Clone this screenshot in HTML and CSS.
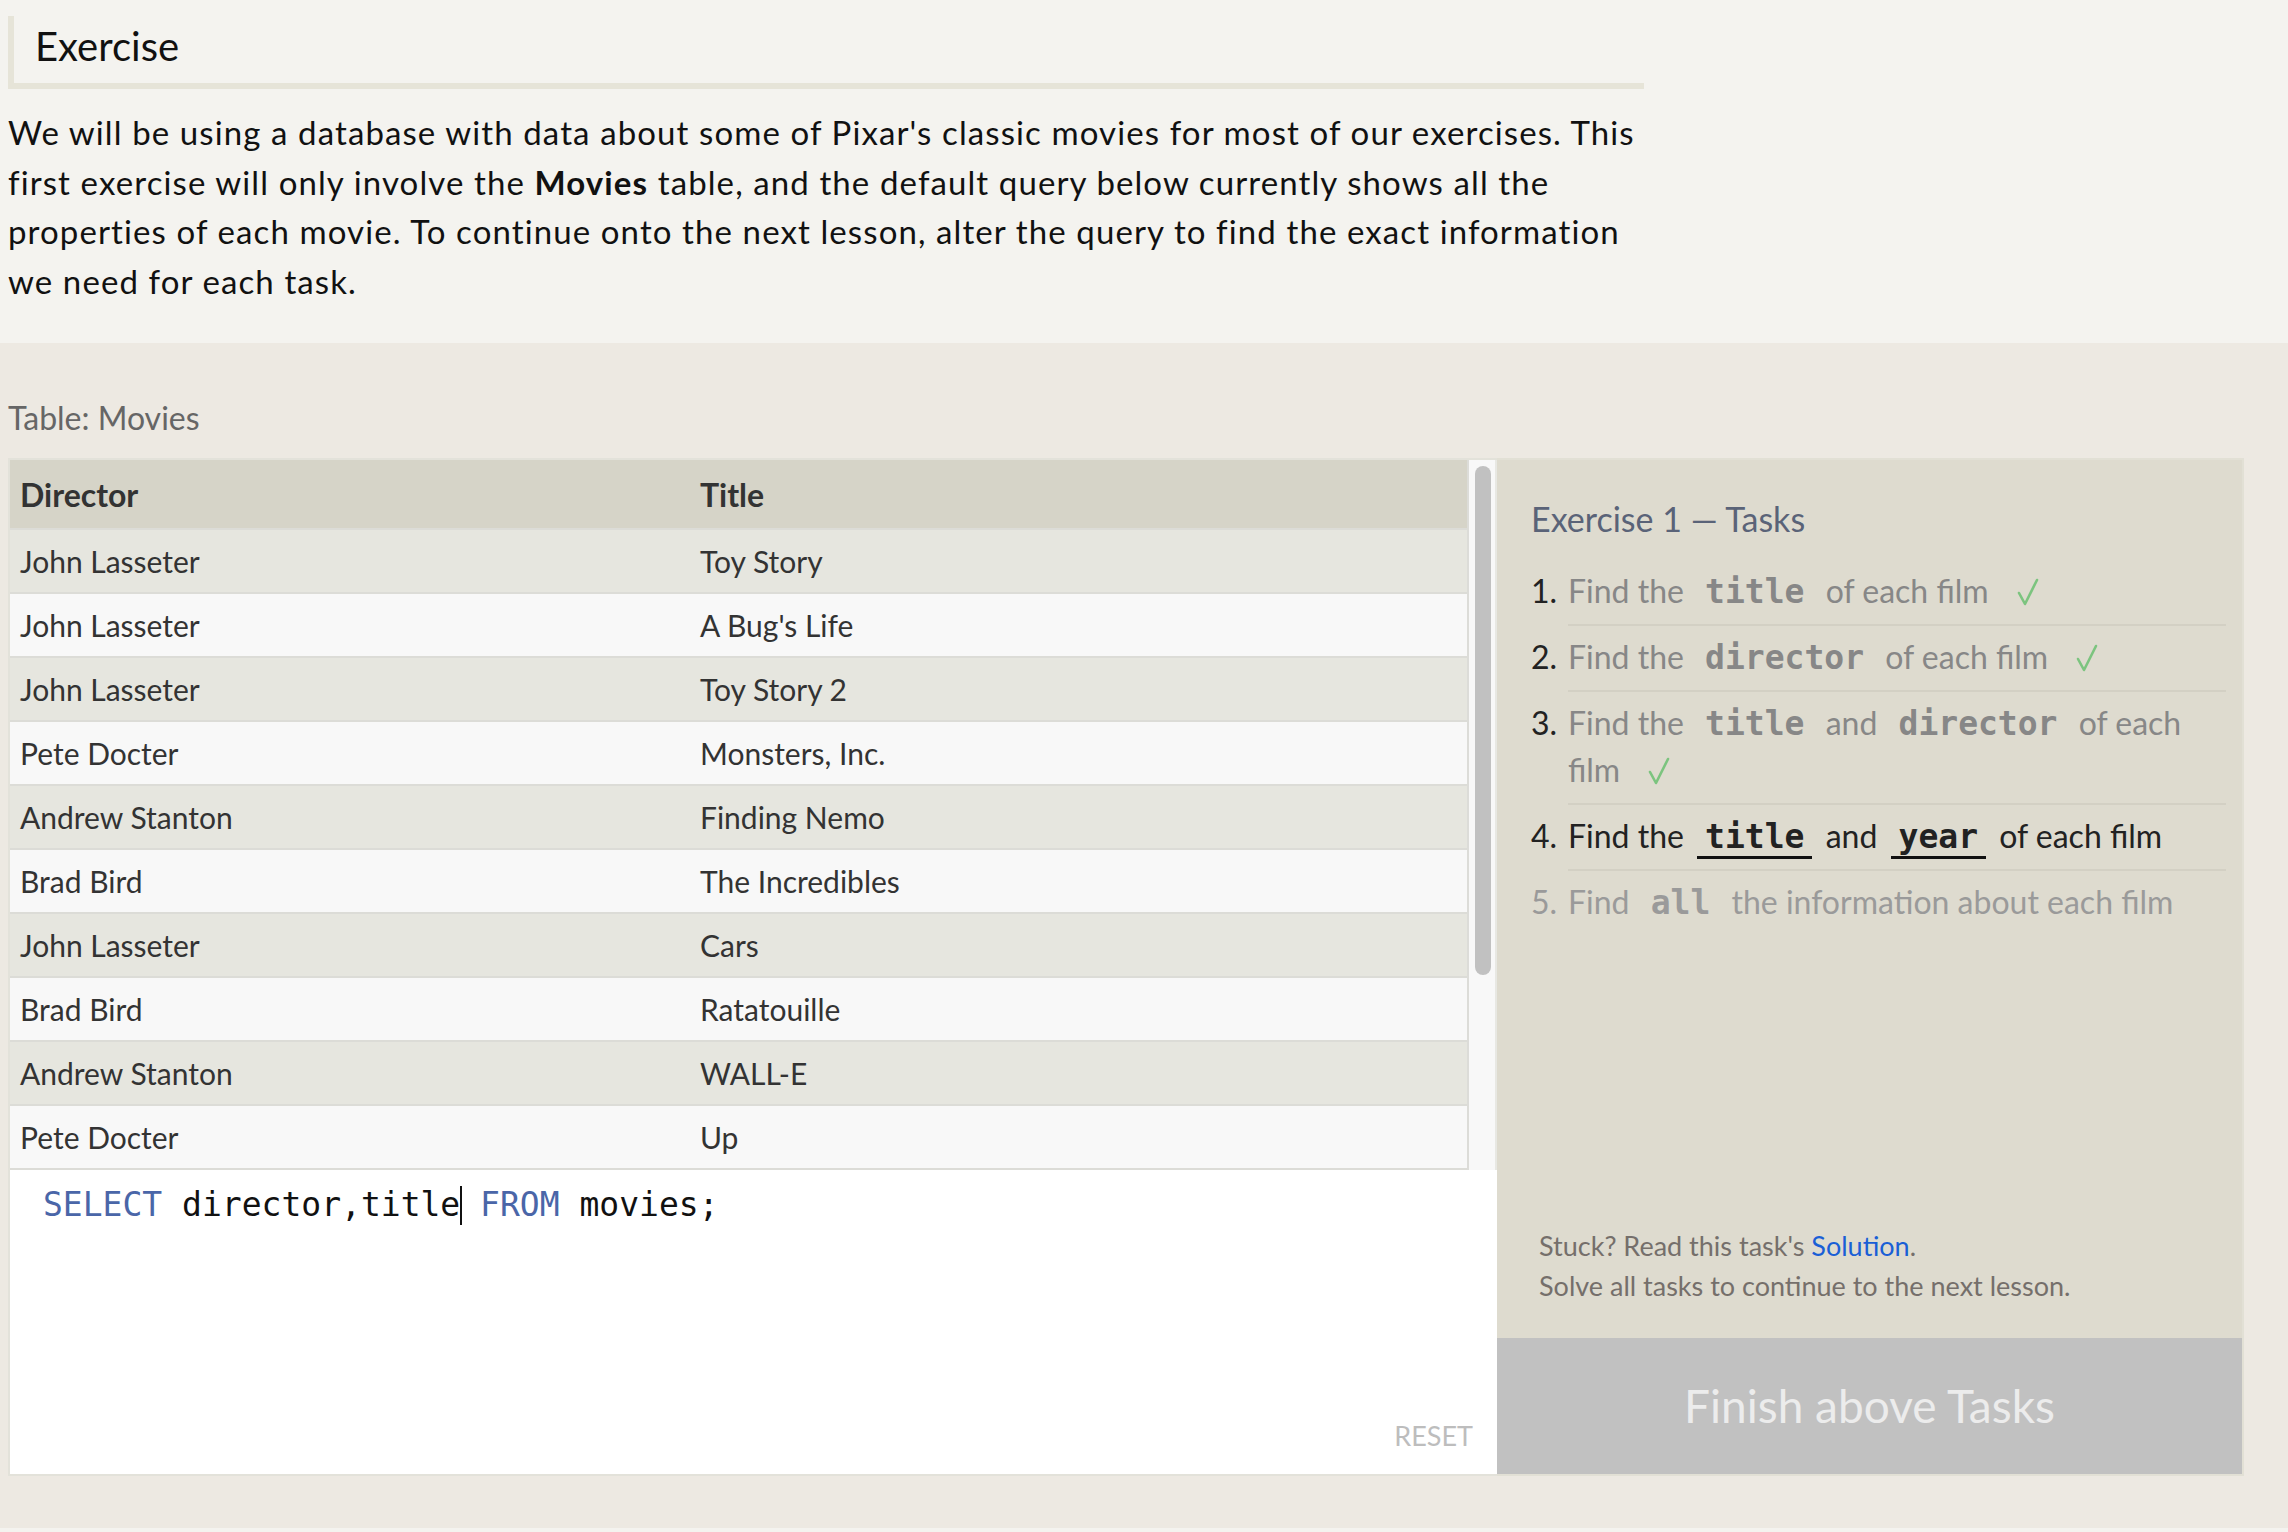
FILE: index.html
```html
<!DOCTYPE html>
<html lang="en">
<head>
<meta charset="utf-8">
<title>SQL Exercise</title>
<link rel="stylesheet" href="styles.css">
</head>
<body>
<div class="intro">
  <h1 class="heading">Exercise</h1>
  <p class="lead">We will be using a database with data about some of Pixar's classic movies for most of our exercises. This first exercise will only involve the <strong>Movies</strong> table, and the default query below currently shows all the properties of each movie. To continue onto the next lesson, alter the query to find the exact information we need for each task.</p>
</div>
<section class="exercise">
  <div class="table-label">Table: Movies</div>
  <div class="workspace">
    <div class="left">
      <div class="scroll-area">
        <div class="table-clip">
          <table class="results">
            <thead>
              <tr><th class="c1">Director</th><th>Title</th></tr>
            </thead>
            <tbody>
              <tr><td>John Lasseter</td><td>Toy Story</td></tr>
              <tr><td>John Lasseter</td><td>A Bug's Life</td></tr>
              <tr><td>John Lasseter</td><td>Toy Story 2</td></tr>
              <tr><td>Pete Docter</td><td>Monsters, Inc.</td></tr>
              <tr><td>Andrew Stanton</td><td>Finding Nemo</td></tr>
              <tr><td>Brad Bird</td><td>The Incredibles</td></tr>
              <tr><td>John Lasseter</td><td>Cars</td></tr>
              <tr><td>Brad Bird</td><td>Ratatouille</td></tr>
              <tr><td>Andrew Stanton</td><td>WALL-E</td></tr>
              <tr><td>Pete Docter</td><td>Up</td></tr>
              <tr><td>Lee Unkrich</td><td>Toy Story 3</td></tr>
              <tr><td>John Lasseter</td><td>Cars 2</td></tr>
              <tr><td>Brenda Chapman</td><td>Brave</td></tr>
              <tr><td>Dan Scanlon</td><td>Monsters University</td></tr>
            </tbody>
          </table>
        </div>
        <div class="scrollbar"><div class="thumb"></div></div>
      </div>
      <div class="editor">
        <div class="code"><span class="kw">SELECT</span> director,title<span class="cursor"></span> <span class="kw">FROM</span> movies;</div>
        <div class="reset">RESET</div>
      </div>
    </div>
    <div class="tasks">
      <h2 class="tasks-title">Exercise 1 — Tasks</h2>
      <ol class="task-list">
        <li class="done"><span class="n">1.</span><span class="t">Find the <code>title</code> of each film <svg class="check" width="22" height="28" viewBox="0 0 22 28"><path d="M2 15 L8 26 L20 2" fill="none" stroke="#7cc47f" stroke-width="2.6" stroke-linejoin="round" stroke-linecap="round"/></svg></span></li>
        <li class="done"><span class="n">2.</span><span class="t">Find the <code>director</code> of each film <svg class="check" width="22" height="28" viewBox="0 0 22 28"><path d="M2 15 L8 26 L20 2" fill="none" stroke="#7cc47f" stroke-width="2.6" stroke-linejoin="round" stroke-linecap="round"/></svg></span></li>
        <li class="done"><span class="n">3.</span><span class="t">Find the <code>title</code> and <code>director</code> of each film <svg class="check" width="22" height="28" viewBox="0 0 22 28"><path d="M2 15 L8 26 L20 2" fill="none" stroke="#7cc47f" stroke-width="2.6" stroke-linejoin="round" stroke-linecap="round"/></svg></span></li>
        <li class="current"><span class="n">4.</span><span class="t">Find the <code>title</code> and <code>year</code> of each film</span></li>
        <li class="todo"><span class="n">5.</span><span class="t">Find <code>all</code> the information about each film</span></li>
      </ol>
      <div class="help">
        <p>Stuck? Read this task's <a class="link" href="#">Solution</a>.</p>
        <p>Solve all tasks to continue to the next lesson.</p>
      </div>
      <div class="finish">Finish above Tasks</div>
    </div>
  </div>
</section>
</body>
</html>
```
FILE: styles.css
```css
html, body {
  margin: 0;
  padding: 0;
}
body {
  background: #f4f3ef;
  font-family: Lato, "Open Sans", sans-serif;
  color: #111;
  min-height: 1532px;
}
.intro {
  width: 1636px;
  padding: 16px 8px 0;
}
.heading {
  margin: 0;
  font-weight: normal;
  font-size: 40px;
  line-height: 61px;
  padding: 0 0 6px 21px;
  border-left: 6px solid #e6e4d8;
  border-bottom: 6px solid #e6e4d8;
}
.lead {
  width: 1650px;
  margin: 19px 0 0;
  font-size: 33px;
  line-height: 49.5px;
  letter-spacing: 1.1px;
}
.lead strong {
  font-weight: bold;
}
.exercise {
  margin-top: 37px;
  background: #ede9e2;
  padding: 52px 0 52px 8px;
}
.table-label {
  font-size: 32px;
  line-height: 46px;
  color: #666;
}
.workspace {
  display: flex;
  width: 2236px;
  margin-top: 17px;
}
.left {
  width: 1487px;
  border: 2px solid #e3e2da;
  border-right: 0;
  display: flex;
  flex-direction: column;
}
.scroll-area {
  display: flex;
  height: 710px;
}
.table-clip {
  flex: 1;
  overflow: hidden;
  background: #f8f8f8;
}
.scrollbar {
  flex: none;
  width: 16px;
  padding: 6px 4px 0 6px;
  background: #f8f8f8;
  border-left: 2px solid #dcdcd8;
  border-right: 2px solid #e8e8e3;
}
.thumb {
  height: 509px;
  background: #c1c1c1;
  border-radius: 8px;
}
.results {
  width: 100%;
  border-collapse: separate;
  border-spacing: 0;
  color: #333;
}
.results th,
.results td {
  text-align: left;
  padding: 0 10px;
  border-bottom: 2px solid #dcdcd7;
}
.results th {
  height: 68px;
  background: #d6d4c8;
  font-size: 32px;
  font-weight: bold;
}
.results .c1 {
  width: 660px;
}
.results td {
  height: 62px;
  font-size: 30px;
}
.results tbody tr:nth-child(odd) td {
  background: #e6e6df;
}
.results tbody tr:nth-child(even) td {
  background: #f8f8f8;
}
.editor {
  height: 304px;
  background: #fff;
  display: flex;
  flex-direction: column;
  box-sizing: border-box;
  padding: 12px 24px 22px 33px;
}
.code {
  font-family: "DejaVu Sans Mono", "Liberation Mono", monospace;
  font-size: 33px;
  line-height: 46px;
  color: #111;
  white-space: pre;
}
.kw {
  color: #4a66a8;
}
.cursor {
  display: inline-block;
  width: 2px;
  height: 39px;
  margin-right: -2px;
  background: #111;
  vertical-align: -9px;
}
.reset {
  margin-top: auto;
  align-self: flex-end;
  font-size: 27px;
  line-height: 32px;
  color: #bdbdbd;
}
.tasks {
  width: 745px;
  border: 2px solid #e2e0d5;
  border-left: 0;
  background: #dedbcf;
  display: flex;
  flex-direction: column;
}
.tasks-title {
  margin: 0;
  padding: 38px 34px 0;
  font-weight: normal;
  font-size: 34px;
  line-height: 41px;
  color: #5a6378;
}
.task-list {
  list-style: none;
  margin: 21px 0 0;
  padding: 0 16px 0 34px;
}
.task-list li {
  display: flex;
  font-size: 32px;
  line-height: 47px;
}
.task-list .n {
  flex: none;
  width: 37px;
  padding-top: 7px;
  color: #222;
}
.task-list .t {
  flex: 1;
  padding: 7px 0 10px;
  border-bottom: 2px solid #d3d0c4;
}
.task-list li:last-child .t {
  border-bottom: 0;
}
.task-list code {
  font-family: "DejaVu Sans Mono", "Liberation Mono", monospace;
  font-weight: bold;
  font-size: 33px;
  line-height: 20px;
  padding: 0 8px;
  margin: 0 5px;
}
.done .t {
  color: #878787;
}
.current .t {
  color: #222;
}
.current code {
  border-bottom: 3px solid #111;
}
.todo .n,
.todo .t {
  color: #9a9a9a;
}
.check {
  margin-left: 20px;
  vertical-align: -3px;
}
.help {
  margin-top: auto;
  padding: 0 20px 32px 42px;
  font-size: 27px;
  line-height: 40px;
  color: #756f6b;
}
.help p {
  margin: 0;
}
.link {
  color: #1a5fd6;
  text-decoration: none;
}
.finish {
  height: 136px;
  line-height: 136px;
  background: #c1c1c1;
  color: #ececec;
  font-size: 46px;
  text-align: center;
}
```
